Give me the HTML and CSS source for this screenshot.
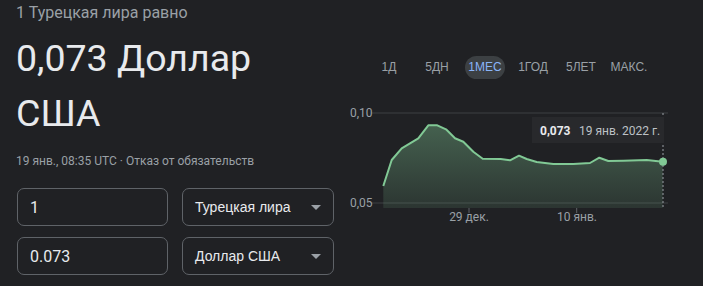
FILE: index.html
```html
<!DOCTYPE html>
<html lang="ru">
<head>
    <meta charset="UTF-8">
    <title>Конвертер валют</title>
    <link rel="stylesheet" href="styles.css">
</head>
<body>
    <div class="card">
        <div class="left">
            <div class="lead">1 Турецкая лира равно</div>
            <div class="result">0,073 Доллар США</div>
            <div class="meta">19 янв., 08:35 UTC · <span class="link">Отказ от обязательств</span></div>

            <div class="converter">
                <div class="field">1</div>
                <div class="select">Турецкая лира <span class="arrow"></span></div>
                <div class="field">0.073</div>
                <div class="select">Доллар США <span class="arrow"></span></div>
            </div>
        </div>

        <div class="right">
            <div class="tabs">
                <span class="tab"><span>1Д</span></span>
                <span class="tab"><span>5ДН</span></span>
                <span class="tab active"><span>1МЕС</span></span>
                <span class="tab"><span>1ГОД</span></span>
                <span class="tab"><span>5ЛЕТ</span></span>
                <span class="tab"><span>МАКС.</span></span>
            </div>

            <svg class="chart" width="358" height="130" viewBox="0 0 358 130">
                <defs>
                    <linearGradient id="fill" x1="0" y1="0" x2="0" y2="1">
                        <stop offset="0" stop-color="#81c995" stop-opacity="0.38"/>
                        <stop offset="1" stop-color="#81c995" stop-opacity="0.12"/>
                    </linearGradient>
                </defs>

                <!-- grid -->
                <line x1="26" y1="13" x2="323" y2="13" class="grid"/>
                <line x1="26" y1="103" x2="323" y2="103" class="grid"/>
                <text x="5" y="17" class="axis">0,10</text>
                <text x="5" y="107" class="axis">0,05</text>

                <!-- area + line -->
                <path fill="url(#fill)" d="M38.3,86 L46.7,60 L56.7,48.3 L65,43.3 L73.3,38.3 L83.3,25.3 L92.3,25.3 L101,29.3 L110,38.3 L118.3,41.7 L128.3,51.7 L137.7,58.7 L155.7,59 L165,60.3 L174,55.7 L181.7,59 L191.7,62 L208.3,64 L228.3,64 L245,63 L254.3,57.7 L263.3,61 L278.3,60.7 L301.7,60 L317.7,61.7 L317.7,108 L38.3,108 Z"/>
                <polyline class="line" points="38.3,86 46.7,60 56.7,48.3 65,43.3 73.3,38.3 83.3,25.3 92.3,25.3 101,29.3 110,38.3 118.3,41.7 128.3,51.7 137.7,58.7 155.7,59 165,60.3 174,55.7 181.7,59 191.7,62 208.3,64 228.3,64 245,63 254.3,57.7 263.3,61 278.3,60.7 301.7,60 317.7,61.7"/>

                <!-- x axis -->
                <line x1="124" y1="108" x2="124" y2="113" class="tick"/>
                <line x1="231.7" y1="108" x2="231.7" y2="113" class="tick"/>
                <text x="124" y="121" class="axis mid">29 дек.</text>
                <text x="232" y="121" class="axis mid">10 янв.</text>

                <!-- cursor -->
                <line x1="318" y1="13" x2="318" y2="108" class="cursor"/>
                <circle cx="318" cy="61.7" r="4" fill="#81c995"/>

                <rect x="187" y="17" width="132" height="26" class="tip"/>
                <text x="195" y="35" class="tip-value">0,073</text>
                <text x="234" y="35" class="tip-date">19 янв. 2022 г.</text>
            </svg>
        </div>
    </div>
</body>
</html>
```

FILE: styles.css
```css
body {
    margin: 0;
    background: #202124;
    color: #e8eaed;
    font-family: Roboto, "Liberation Sans", Arial, sans-serif;
    overflow: hidden;
}

.card {
    display: flex;
    height: 286px;
}

.left {
    width: 329px;
    padding-left: 16px;
}

.lead {
    margin-top: 3px;
    font-size: 16px;
    line-height: 20px;
    color: #9aa0a6;
}

.result {
    margin-top: 8px;
    font-size: 37.5px;
    line-height: 55px;
    color: #e8eaed;
    width: 290px;
}

.meta {
    margin-top: 12px;
    font-size: 12px;
    line-height: 16px;
    color: #9aa0a6;
}

.converter {
    display: grid;
    grid-template-columns: 151px 152px;
    column-gap: 14px;
    row-gap: 11px;
    margin-top: 19px;
    margin-left: 1px;
}

.field,
.select {
    box-sizing: border-box;
    height: 38px;
    border: 1px solid #5f6368;
    border-radius: 7px;
    display: flex;
    align-items: center;
}

.field {
    padding-left: 12px;
    font-size: 16px;
    color: #e8eaed;
}

.select {
    justify-content: space-between;
    padding: 0 12px 0 12px;
    font-family: "Liberation Sans", Arial, sans-serif;
    font-size: 14px;
    color: #e8eaed;
}

.arrow {
    width: 0;
    height: 0;
    border-left: 5px solid transparent;
    border-right: 5px solid transparent;
    border-top: 5px solid #9aa0a6;
}

.right {
    flex: 1;
}

.tabs {
    display: flex;
    align-items: center;
    margin-top: 56px;
    margin-left: 20px;
    height: 23px;
    font-family: "Liberation Sans", Arial, sans-serif;
    font-size: 12px;
    color: #9aa0a6;
}

.tab {
    width: 48px;
    display: flex;
    justify-content: center;
}

.tab span {
    line-height: 23px;
    border-radius: 12px;
}

.tab.active span {
    width: 40px;
    text-align: center;
    background: #3c4043;
    color: #8ab4f8;
}

.chart {
    display: block;
    margin-top: 21px;
}

.grid {
    stroke: #3c4043;
    stroke-width: 1;
}

.tick {
    stroke: #5f6368;
    stroke-width: 1;
}

.axis {
    font-family: Roboto, "Liberation Sans", Arial, sans-serif;
    font-size: 12px;
    fill: #9aa0a6;
}

.mid {
    text-anchor: middle;
}

.line {
    fill: none;
    stroke: #81c995;
    stroke-width: 2;
    stroke-linejoin: round;
}

.cursor {
    stroke: #9aa0a6;
    stroke-width: 1;
    stroke-dasharray: 2 2;
}

.tip {
    fill: #28292c;
}

.tip-value {
    font-family: Roboto, "Liberation Sans", Arial, sans-serif;
    font-size: 12px;
    font-weight: bold;
    fill: #e8eaed;
}

.tip-date {
    font-family: Roboto, "Liberation Sans", Arial, sans-serif;
    font-size: 12px;
    fill: #bdc1c6;
}
```
